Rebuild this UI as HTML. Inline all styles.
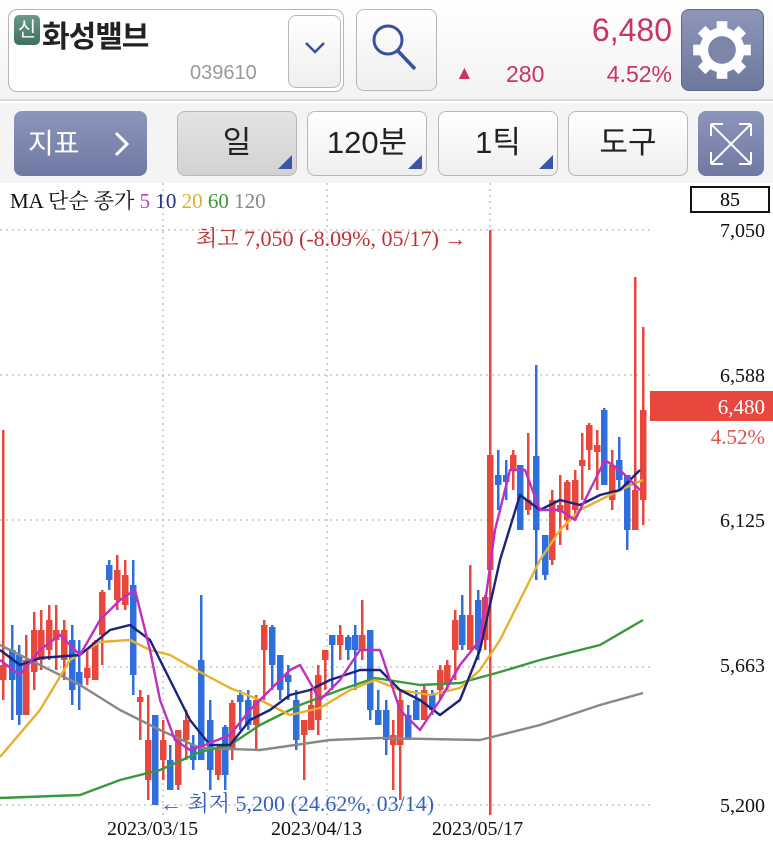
<!DOCTYPE html>
<html><head><meta charset="utf-8">
<style>
*{margin:0;padding:0;box-sizing:border-box}
body{width:773px;height:844px;overflow:hidden;background:#fff;font-family:"Liberation Sans","Noto Sans CJK KR",sans-serif;position:relative}
.abs{position:absolute}
.top{left:0;top:0;width:773px;height:101px;background:linear-gradient(#fff,#f3f3f3);border-bottom:2px solid #d8d8d8}
.row2{left:0;top:103px;width:773px;height:80px;background:#f4f4f4}
.btn{position:absolute;border:1px solid #b8b8b8;border-radius:8px;background:linear-gradient(#fff,#efefef);font-size:31px;color:#222;text-align:center;line-height:62px}
.tri{position:absolute;right:4px;bottom:6px;width:0;height:0;border-left:14px solid transparent;border-bottom:14px solid #3b55a8}
.serif{font-family:"Liberation Serif","Noto Serif CJK SC",serif}
</style></head><body>
<div class="abs top"></div>
<div class="abs" style="left:8px;top:9px;width:336px;height:83px;border:1px solid #b5b5b5;border-radius:9px;background:#fff"></div>
<div class="abs" style="left:14px;top:15px;width:26px;height:30px;border-radius:5px;background:linear-gradient(#6a9a8a,#3f6f60);color:#fff;font-size:20px;text-align:center;line-height:30px">신</div>
<div class="abs" style="left:42px;top:12px;font-size:30px;color:#222;font-weight:bold;letter-spacing:-1px">화성밸브</div>
<div class="abs" style="left:190px;top:62px;font-size:20px;color:#999">039610</div>
<div class="btn" style="left:288px;top:15px;width:53px;height:73px"></div>
<svg class="abs" style="left:303px;top:40px" width="24" height="16"><path d="M3 3 L12 12 L21 3" fill="none" stroke="#3b4fa0" stroke-width="2.5"/></svg>
<div class="btn" style="left:356px;top:9px;width:81px;height:82px"></div>
<svg class="abs" style="left:365px;top:18px" width="60" height="60"><circle cx="23" cy="22" r="14" fill="none" stroke="#3b4fa0" stroke-width="3"/><path d="M33 33 L50 51" stroke="#3b4fa0" stroke-width="3.5"/></svg>
<div class="abs" style="left:540px;top:12px;width:132px;text-align:right;font-size:32px;color:#c8336a">6,480</div>
<div class="abs" style="left:455px;top:63px;font-size:19px;color:#c8336a">▲</div>
<div class="abs" style="left:506px;top:61px;font-size:23px;color:#c8336a">280</div>
<div class="abs" style="left:580px;top:61px;width:92px;text-align:right;font-size:23px;color:#c8336a">4.52%</div>
<div class="abs" style="left:681px;top:9px;width:83px;height:82px;border-radius:8px;background:linear-gradient(#8d96b8,#6e789e);border:1px solid #5d678c"></div>
<svg class="abs" style="left:690px;top:18px" width="64" height="64" viewBox="0 0 60 60"><g fill="#fff"><circle cx="30" cy="30" r="21"/><g id="t"><rect x="25" y="3" width="10" height="12"/></g><use href="#t" transform="rotate(45 30 30)"/><use href="#t" transform="rotate(90 30 30)"/><use href="#t" transform="rotate(135 30 30)"/><use href="#t" transform="rotate(180 30 30)"/><use href="#t" transform="rotate(225 30 30)"/><use href="#t" transform="rotate(270 30 30)"/><use href="#t" transform="rotate(315 30 30)"/></g><circle cx="30" cy="30" r="13" fill="#7d86aa"/></svg>

<div class="abs row2"></div>
<div class="abs" style="left:14px;top:111px;width:133px;height:65px;border-radius:8px;background:linear-gradient(#8c95bb,#6f79a3);color:#fff;font-size:28px;line-height:65px;padding-left:14px">지표</div>
<svg class="abs" style="left:112px;top:130px" width="20" height="28"><path d="M4 3 L15 14 L4 25" fill="none" stroke="#fff" stroke-width="3"/></svg>
<div class="btn" style="left:177px;top:111px;width:120px;height:65px;background:linear-gradient(#e4e4e4,#d2d2d2)">일<div class="tri"></div></div>
<div class="btn" style="left:307px;top:111px;width:120px;height:65px">120분<div class="tri"></div></div>
<div class="btn" style="left:438px;top:111px;width:120px;height:65px">1틱<div class="tri"></div></div>
<div class="btn" style="left:568px;top:111px;width:120px;height:65px">도구</div>
<div class="abs" style="left:698px;top:111px;width:66px;height:65px;border-radius:8px;background:linear-gradient(#8c95bb,#6f79a3)"></div>
<svg class="abs" style="left:706px;top:119px" width="50" height="50"><g fill="none" stroke="#fff" stroke-width="2"><path d="M5 5 L45 45 M45 5 L5 45 M5 5 h12 M5 5 v12 M45 5 h-12 M45 5 v12 M5 45 h12 M5 45 v-12 M45 45 h-12 M45 45 v-12"/></g></svg>

<div class="abs serif" style="left:10px;top:185px;font-size:21px;color:#111">MA 단순 종가 <span style="color:#c03cc0">5</span> <span style="color:#23308a">10</span> <span style="color:#e0b030">20</span> <span style="color:#3a9a3a">60</span> <span style="color:#888">120</span></div>
<div class="abs serif" style="left:690px;top:186px;width:80px;height:27px;border:2px solid #111;text-align:center;font-size:20px;line-height:24px">85</div>

<svg class="abs" style="left:0;top:0" width="773" height="844" id="ch">
<g stroke="#bbb" stroke-dasharray="2,4" stroke-width="1.3">
<line x1="0" y1="230" x2="650" y2="230"/><line x1="0" y1="375" x2="650" y2="375"/><line x1="0" y1="520" x2="650" y2="520"/><line x1="0" y1="667" x2="650" y2="667"/><line x1="0" y1="805" x2="650" y2="805"/>
<line x1="163" y1="183" x2="163" y2="815"/><line x1="327" y1="183" x2="327" y2="815"/><line x1="490" y1="183" x2="490" y2="815"/>
</g>
<g id="cd"></g>
<g fill="none" stroke-width="2.4" stroke-linejoin="round">
<polyline stroke="#888" points="0,645 40,665 80,685 120,710 160,730 200,748 260,750 330,740 380,738 480,740 540,725 600,705 643,693"/>
<polyline stroke="#3a9a3a" points="0,798 80,795 120,780 160,770 200,752 230,745 260,725 300,705 340,690 375,678 420,685 460,683 500,672 540,660 600,645 643,620"/>
<polyline stroke="#e8b030" points="0,757 40,710 70,660 100,642 130,640 150,650 170,655 200,672 230,688 260,700 290,715 320,708 350,690 375,680 400,690 430,695 460,688 480,670 500,640 520,600 540,560 560,530 580,510 600,500 620,490 643,480"/>
<polyline stroke="#1a237e" points="0,650 20,665 40,658 80,655 110,630 130,625 150,640 170,680 190,720 210,745 230,745 250,720 270,710 290,695 310,690 330,680 360,670 380,670 400,690 420,700 440,715 460,700 480,650 500,560 520,495 540,510 560,500 580,505 600,495 620,490 640,470"/>
<polyline stroke="#c030c0" points="0,660 20,675 40,650 60,635 80,655 100,620 120,600 135,590 150,650 160,700 175,740 190,750 205,745 230,735 250,710 270,690 290,670 300,665 320,700 340,680 360,650 380,650 400,710 420,730 440,700 460,665 480,640 495,530 510,470 525,470 540,510 560,510 575,520 590,490 605,460 620,470 640,490"/>
</g>
<text x="196" y="246" font-family="Liberation Serif,Noto Serif CJK KR,serif" font-size="22" fill="#c03030">최고 7,050 (-8.09%, 05/17) →</text>
<text x="160" y="811" font-family="Liberation Serif,Noto Serif CJK KR,serif" font-size="22" fill="#3560c0">← 최저 5,200 (24.62%, 03/14)</text>
<g font-family="Liberation Serif,serif" font-size="20" fill="#111">
<text x="107" y="835">2023/03/15</text><text x="271" y="835">2023/04/13</text><text x="432" y="835">2023/05/17</text>
<text x="765" y="237" text-anchor="end">7,050</text><text x="765" y="382" text-anchor="end">6,588</text><text x="765" y="527" text-anchor="end">6,125</text><text x="765" y="672" text-anchor="end">5,663</text><text x="765" y="812" text-anchor="end">5,200</text>
</g>
<rect x="650" y="391" width="123" height="30" fill="#e8473e"/>
<text x="765" y="414" text-anchor="end" font-family="Liberation Serif,serif" font-size="21" fill="#fff">6,480</text>
<text x="765" y="444" text-anchor="end" font-family="Liberation Serif,serif" font-size="21" fill="#e05050">4.52%</text>
</svg>
<script>
var d=[[3,430,700,665,680,'r'],[12,625,720,650,680,'b'],[19,645,725,655,715,'b'],[26,635,715,660,715,'r'],[34,612,690,630,672,'r'],[41,610,670,630,660,'r'],[49,605,660,620,650,'r'],[56,605,670,630,640,'r'],[64,620,680,630,660,'r'],[72,625,705,640,690,'b'],[79,640,710,672,685,'b'],[87,650,685,668,678,'r'],[95,640,680,642,680,'r'],[102,590,665,592,635,'r'],[109,560,590,565,580,'b'],[117,555,610,570,600,'r'],[125,560,610,575,605,'r'],[133,560,695,585,675,'b'],[140,690,740,697,702,'r'],[148,695,800,740,780,'r'],[155,715,805,715,805,'b'],[163,720,780,740,760,'r'],[170,745,790,760,790,'b'],[178,730,790,730,785,'r'],[186,710,760,720,740,'r'],[193,735,770,745,760,'b'],[201,595,760,660,760,'b'],[210,700,790,720,770,'b'],[218,745,780,748,775,'r'],[225,725,790,727,775,'b'],[232,700,760,703,750,'r'],[240,690,730,695,702,'b'],[248,690,730,700,725,'b'],[256,695,750,700,725,'r'],[264,620,700,625,650,'r'],[272,625,690,627,665,'b'],[280,655,700,655,690,'b'],[288,665,700,675,682,'b'],[296,690,750,700,740,'b'],[304,720,780,720,735,'r'],[311,690,730,705,730,'r'],[318,665,735,675,720,'r'],[325,650,690,650,660,'r'],[332,635,690,635,645,'b'],[340,625,660,635,645,'r'],[348,635,660,637,650,'b'],[355,625,690,635,650,'b'],[362,600,660,635,650,'r'],[370,630,720,630,710,'b'],[378,690,725,710,725,'b'],[386,700,755,710,740,'b'],[393,720,790,735,745,'r'],[400,690,800,700,745,'r'],[408,705,740,715,740,'b'],[416,690,720,700,720,'b'],[424,685,720,690,720,'r'],[432,690,715,695,710,'b'],[440,665,700,670,690,'r'],[447,660,690,665,685,'r'],[455,610,680,620,650,'r'],[462,595,650,615,645,'b'],[470,565,640,615,650,'r'],[478,590,660,600,650,'b'],[485,595,650,597,640,'r'],[490,230,815,455,570,'r'],[498,450,510,475,485,'b'],[506,460,500,475,482,'b'],[513,450,490,455,470,'r'],[520,465,525,465,530,'b'],[528,433,515,500,510,'r'],[536,365,580,456,530,'b'],[545,535,580,535,575,'b'],[552,490,565,500,560,'r'],[560,475,545,505,512,'r'],[567,480,530,482,520,'r'],[575,470,520,480,510,'r'],[582,433,500,460,466,'r'],[589,423,470,425,450,'r'],[597,430,490,445,452,'r'],[604,408,485,410,485,'b'],[612,450,510,465,500,'r'],[619,437,490,460,480,'b'],[627,475,550,475,530,'b'],[635,277,530,490,530,'r'],[643,327,525,410,500,'r']];
var s='';d.forEach(function(c){var col=c[5]=='r'?'#e8473e':'#2f6fdc';s+='<rect x="'+(c[0]-1)+'" y="'+c[1]+'" width="2.5" height="'+(c[2]-c[1])+'" fill="'+col+'"/><rect x="'+(c[0]-3)+'" y="'+c[3]+'" width="6.5" height="'+Math.max(3,c[4]-c[3])+'" fill="'+col+'"/>';});
document.getElementById('cd').innerHTML=s;
</script>
</body></html>
